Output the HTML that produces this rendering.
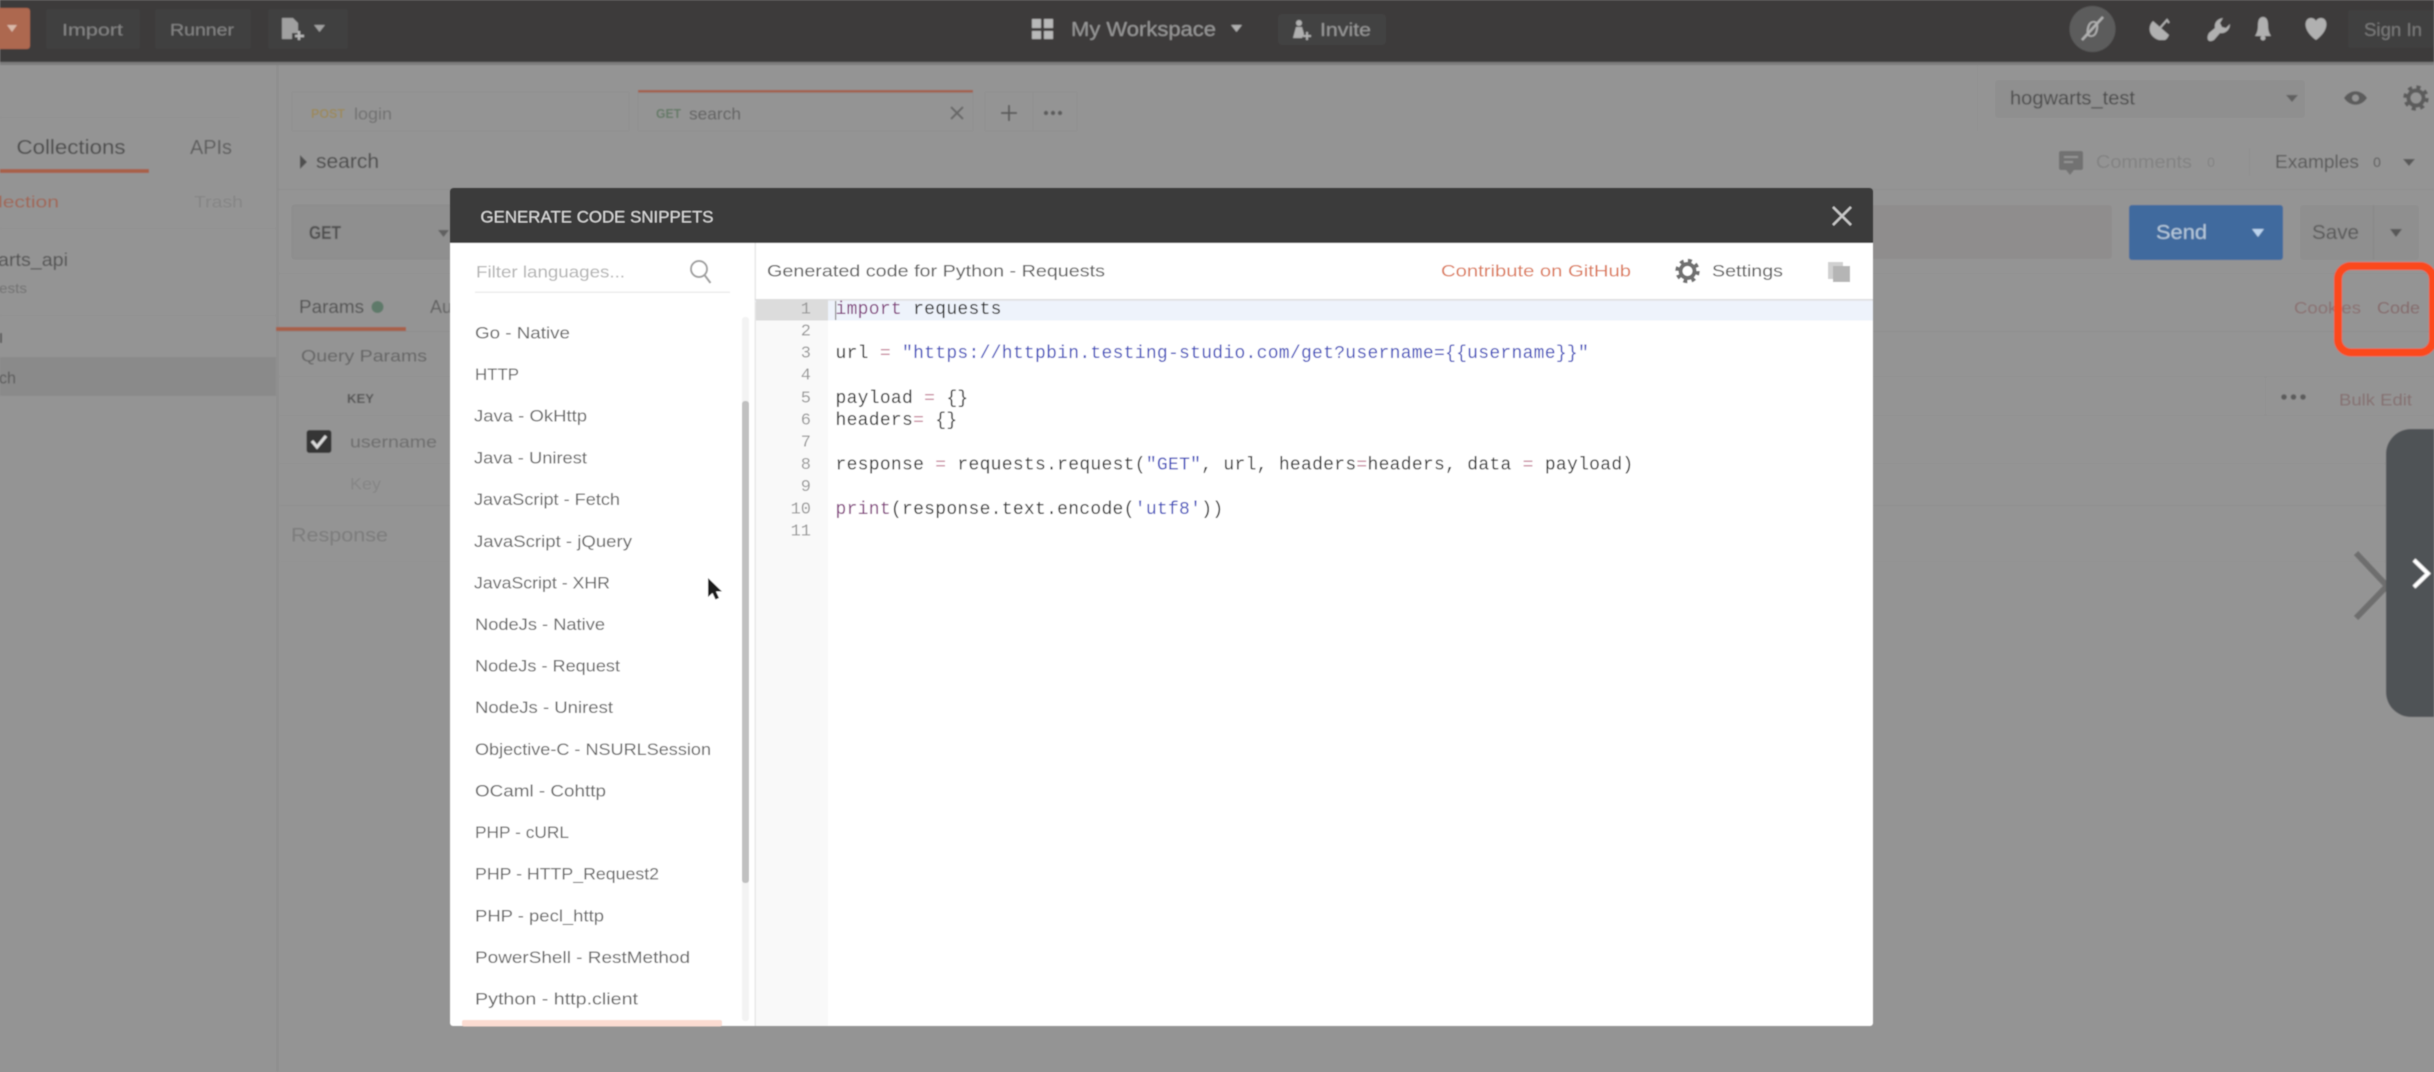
<!DOCTYPE html>
<html lang="en">
<head>
<meta charset="utf-8">
<title>Generate Code Snippets</title>
<style>
html,body{margin:0;padding:0;width:2434px;height:1072px;overflow:hidden;background:#949494}
svg{display:block;position:absolute;left:0;top:0}
text{font-family:"Liberation Sans","DejaVu Sans",sans-serif;dominant-baseline:central;white-space:pre}
.code text{font-family:"Liberation Mono","DejaVu Sans Mono",monospace;font-size:18px;letter-spacing:.28px;fill:#2c2c2c}
.code .n{fill:#999;letter-spacing:0;text-anchor:end;font-size:17px}
.k{fill:#84407f}.s{fill:#3f4cbc}.o{fill:#c98aa0}
.lang text{font-size:17px;fill:#666}
</style>
</head>
<body>
<svg width="2434" height="1072" viewBox="0 0 2434 1072" xmlns="http://www.w3.org/2000/svg">
<defs>
<filter id="b1" x="0" y="0" width="100%" height="100%"><feGaussianBlur stdDeviation="0.9"/></filter>
<filter id="b2" x="-2%" y="-2%" width="104%" height="104%"><feGaussianBlur stdDeviation="0.55"/></filter>
<linearGradient id="sh" x1="0" y1="0" x2="0" y2="1"><stop offset="0" stop-color="#d8d8d8"/><stop offset="1" stop-color="#f4f6fb"/></linearGradient>
</defs>

<!-- dimmed application -->
<g filter="url(#b1)">
<rect width="2434" height="1072" fill="#949494"/>
<!-- top bar -->
<rect width="2434" height="62" fill="#3c3b3b"/>
<rect y="62" width="2434" height="3" fill="#7c7c7c"/>
<rect x="-8" y="8" width="38" height="41" rx="3" fill="#ad6750"/>
<path d="M7 25h10l-5 7z" fill="#d8b8a8"/>
<rect x="46" y="9" width="94" height="40" rx="3" fill="#414141"/>
<text x="62" y="30" font-size="17" fill="#858585" textLength="61" lengthAdjust="spacingAndGlyphs">Import</text>
<rect x="155" y="9" width="96" height="40" rx="3" fill="#414141"/>
<text x="170" y="30" font-size="17" fill="#858585" textLength="64" lengthAdjust="spacingAndGlyphs">Runner</text>
<rect x="268" y="9" width="80" height="40" rx="3" fill="#414141"/>
<path d="M282 18h11l5 5v10h-6v6h-10z" fill="#a0a0a0"/>
<path d="M299 31v9M295 36h9" stroke="#b8b8b8" stroke-width="2.5"/>
<path d="M314 25h11l-5.500 7z" fill="#a0a0a0"/>
<g fill="#b8b8b8"><rect x="1032" y="19" width="9" height="9"/><rect x="1044" y="19" width="9" height="9"/><rect x="1032" y="31" width="9" height="8"/><rect x="1044" y="31" width="9" height="8"/></g>
<text x="1071" y="30" font-size="20" fill="#9a9a9a" textLength="145" lengthAdjust="spacingAndGlyphs">My Workspace</text>
<path d="M1231 25h11l-5.500 7z" fill="#b0b0b0"/>
<rect x="1278" y="14" width="108" height="31" rx="4" fill="#424242"/>
<circle cx="1299" cy="23" r="3" fill="#b0b0b0"/><path d="M1293 38l3-11h6l2 7-2 4z" fill="#b0b0b0"/><path d="M1307 32v8M1303 36h8" stroke="#b0b0b0" stroke-width="2"/>
<text x="1320" y="30" font-size="18" fill="#9a9a9a" textLength="51" lengthAdjust="spacingAndGlyphs">Invite</text>
<circle cx="2092.500" cy="29" r="23" fill="#5c5c5c"/>
<text x="2092" y="29" font-size="23" fill="#b0b0b0" text-anchor="middle" font-style="italic">0</text>
<path d="M2082 40l21-23" stroke="#b0b0b0" stroke-width="2.500"/>
<path d="M2153 21c-6 6-4 16 6 19l6 0c2-1 3-3 4-5z" fill="#b0b0b0"/><path d="M2160 28l7-8 2 3" stroke="#b0b0b0" stroke-width="2" fill="none"/>
<path d="M2208 40c-1-3 0-5 1-7l6-5c-1-5 2-9 8-10l-3 5 2 4 4 1 4-4c0 6-5 10-10 9l-6 7c-2 1-4 2-6 0z" fill="#b0b0b0"/>
<path d="M2263 17c4 0 5 4 5 8 0 5 1 8 3 11h-16c2-3 3-6 3-11 0-4 1-8 5-8z" fill="#b0b0b0"/><circle cx="2263" cy="38" r="2.500" fill="#b0b0b0"/>
<path d="M2316 40c-14-10-12-22-5-22 2 0 4 1 5 3 1-2 3-3 5-3 7 0 9 12-5 22z" fill="#b0b0b0"/>
<rect x="2348" y="10" width="86" height="38" rx="3" fill="#414141"/>
<text x="2364" y="30" font-size="18" fill="#7a7a7a" textLength="58" lengthAdjust="spacingAndGlyphs">Sign In</text>

<!-- sidebar -->
<rect x="276" y="65" width="3" height="1007" fill="#8f8f8f"/>
<rect x="0" y="117" width="240" height="1" fill="#8f8f8f"/>
<text x="16.500" y="148" font-size="20" fill="#484848" textLength="109" lengthAdjust="spacingAndGlyphs">Collections</text>
<text x="190" y="148" font-size="20" fill="#5c5c5c" textLength="42" lengthAdjust="spacingAndGlyphs">APIs</text>
<rect x="0" y="169" width="149" height="4" fill="#a7604a"/>
<text x="-2" y="202" font-size="17" fill="#a06552" textLength="61" lengthAdjust="spacingAndGlyphs">lection</text>
<text x="194" y="202" font-size="17" fill="#858585" textLength="49" lengthAdjust="spacingAndGlyphs">Trash</text>
<rect x="0" y="228" width="276" height="1" fill="#8e8e8e"/>
<text x="-2" y="260" font-size="18" fill="#505050" textLength="70" lengthAdjust="spacingAndGlyphs">arts_api</text>
<text x="-1" y="288" font-size="14" fill="#707070" textLength="28" lengthAdjust="spacingAndGlyphs">ests</text>
<rect x="0" y="315" width="276" height="1" fill="#8e8e8e"/>
<rect x="0" y="333" width="2" height="10" fill="#5c5c5c"/>
<rect x="0" y="357" width="276" height="39" fill="#8a8a8a"/>
<text x="-1" y="378" font-size="17" fill="#585858" textLength="17" lengthAdjust="spacingAndGlyphs">ch</text>

<!-- tabs -->
<rect x="292" y="92" width="337" height="39" fill="none" stroke="#8f8f8f"/>
<text x="311" y="114" font-size="12.500" font-weight="bold" fill="#9b8a5c" textLength="34" lengthAdjust="spacingAndGlyphs">POST</text>
<text x="354" y="114" font-size="17" fill="#6f6f6f" textLength="38" lengthAdjust="spacingAndGlyphs">login</text>
<rect x="638" y="90" width="335" height="3.500" fill="#a3614c"/>
<rect x="638" y="93" width="335" height="38" fill="none" stroke="#8f8f8f"/>
<text x="656" y="114" font-size="12.500" font-weight="bold" fill="#647a66" textLength="25" lengthAdjust="spacingAndGlyphs">GET</text>
<text x="689" y="114" font-size="17" fill="#606060" textLength="52" lengthAdjust="spacingAndGlyphs">search</text>
<path d="M951 107l12 12M963 107l-12 12" stroke="#666" stroke-width="2"/>
<rect x="985" y="92" width="48" height="39" fill="none" stroke="#8f8f8f"/>
<rect x="1033" y="92" width="44" height="39" fill="none" stroke="#8f8f8f"/>
<path d="M1009 105v16M1001 113h16" stroke="#5c5c5c" stroke-width="2"/>
<g fill="#5c5c5c"><circle cx="1046" cy="113" r="2.200"/><circle cx="1053" cy="113" r="2.200"/><circle cx="1060" cy="113" r="2.200"/></g>
<!-- env -->
<rect x="1977" y="65" width="1" height="66" fill="#8e8e8e"/>
<rect x="1995" y="80" width="310" height="38" rx="3" fill="#8f8f8f"/>
<text x="2010" y="99" font-size="19" fill="#4a4a4a" textLength="125" lengthAdjust="spacingAndGlyphs">hogwarts_test</text>
<path d="M2286 95h12l-6 7z" fill="#606060"/>
<path d="M2344 98c6-9 17-9 23 0-6 9-17 9-23 0z" fill="#5c5c5c"/><circle cx="2355.500" cy="98" r="3.500" fill="#949494"/>
<circle cx="2416" cy="98" r="7.500" fill="none" stroke="#5c5c5c" stroke-width="4"/>
<circle cx="2416" cy="98" r="11" fill="none" stroke="#5c5c5c" stroke-width="3.500" stroke-dasharray="4.300 4.340"/>

<!-- breadcrumb -->
<path d="M300 155l7 7-7 7z" fill="#505050"/>
<text x="316" y="162" font-size="20" fill="#484848" textLength="63" lengthAdjust="spacingAndGlyphs">search</text>
<rect x="2059" y="151" width="24" height="19" rx="2" fill="#727272"/><path d="M2066 170h8l-4 5z" fill="#727272"/><path d="M2064 157h14M2064 162h9" stroke="#949494" stroke-width="2"/>
<text x="2096" y="162" font-size="18" fill="#828282" textLength="96" lengthAdjust="spacingAndGlyphs">Comments</text>
<text x="2211" y="162" font-size="14" fill="#828282" text-anchor="middle">0</text>
<rect x="2249" y="148" width="1" height="28" fill="#8c8c8c"/>
<text x="2275" y="162" font-size="18" fill="#585858" textLength="84" lengthAdjust="spacingAndGlyphs">Examples</text>
<text x="2377" y="162" font-size="14" fill="#585858" text-anchor="middle">0</text>
<path d="M2403 159h12l-6 7z" fill="#585858"/>
<rect x="276" y="189" width="2158" height="1" fill="#8c8c8c"/>

<!-- url row -->
<rect x="292" y="205" width="180" height="54" rx="3" fill="#8f8f8f" stroke="#8a8a8a"/>
<text x="309" y="233" font-size="18" font-weight="bold" fill="#505050" textLength="32" lengthAdjust="spacingAndGlyphs">GET</text>
<path d="M438 230h11l-5.500 7z" fill="#606060"/>
<rect x="1860" y="205" width="252" height="54" rx="3" fill="#8f8d8d"/>
<rect x="2129" y="205" width="154" height="55" rx="3" fill="#3f6a9e"/>
<text x="2156" y="233" font-size="20" fill="#b8cadc" textLength="51" lengthAdjust="spacingAndGlyphs">Send</text>
<path d="M2252 229h12l-6 8z" fill="#bcd4ee"/>
<rect x="2300" y="205" width="119" height="55" rx="3" fill="#8f8f8f"/>
<text x="2312" y="233" font-size="20" fill="#585858" textLength="47" lengthAdjust="spacingAndGlyphs">Save</text>
<rect x="2373" y="205" width="1" height="55" fill="#868686"/>
<path d="M2390 229h12l-6 8z" fill="#585858"/>
<rect x="276" y="273" width="2158" height="1" fill="#8e8e8e"/>

<!-- params tabs -->
<text x="299" y="307" font-size="18" fill="#505050" textLength="65" lengthAdjust="spacingAndGlyphs">Params</text>
<circle cx="377.500" cy="307" r="6" fill="#5f7a6a"/>
<text x="430" y="307" font-size="18" fill="#606060">Au</text>
<rect x="276" y="327" width="130" height="4" fill="#a7604a"/>
<rect x="276" y="331" width="2158" height="1" fill="#8c8c8c"/>
<text x="2294" y="308" font-size="17" fill="#8a6f70" textLength="67" lengthAdjust="spacingAndGlyphs">Cookies</text>
<text x="2377" y="308" font-size="17" fill="#85696a" textLength="43" lengthAdjust="spacingAndGlyphs">Code</text>
<text x="301" y="356" font-size="17" fill="#646464" textLength="126" lengthAdjust="spacingAndGlyphs">Query Params</text>
<rect x="276" y="376" width="2158" height="1" fill="#8e8e8e"/>
<text x="347" y="399" font-size="12.500" font-weight="bold" fill="#555" textLength="27" lengthAdjust="spacingAndGlyphs">KEY</text>
<rect x="2265" y="376" width="1" height="39" fill="#8e8e8e"/>
<g fill="#5c5c5c"><circle cx="2284" cy="397" r="2.800"/><circle cx="2293.500" cy="397" r="2.800"/><circle cx="2303" cy="397" r="2.800"/></g>
<text x="2339" y="400" font-size="17" fill="#856f70" textLength="73" lengthAdjust="spacingAndGlyphs">Bulk Edit</text>
<rect x="280" y="415" width="2154" height="1" fill="#8e8e8e"/>
<rect x="306.500" y="430" width="25" height="23" rx="3" fill="#343434"/>
<path d="M312 441l5 6 9-11" fill="none" stroke="#dcdcdc" stroke-width="3"/>
<text x="350" y="442" font-size="17" fill="#6c6c6c" textLength="87" lengthAdjust="spacingAndGlyphs">username</text>
<rect x="280" y="463" width="2154" height="1" fill="#8e8e8e"/>
<text x="350" y="484" font-size="17" fill="#858585" textLength="31" lengthAdjust="spacingAndGlyphs">Key</text>
<rect x="280" y="505" width="2154" height="1" fill="#8c8c8c"/>
<text x="291" y="536" font-size="19" fill="#7c7c7c" textLength="97" lengthAdjust="spacingAndGlyphs">Response</text>
<rect x="280" y="561" width="2154" height="1" fill="#909090"/>

<!-- right overlays -->
<path d="M2356 553l31 33-31 32" fill="none" stroke="#6e6e6e" stroke-width="6"/>
<path d="M2411 429h23v288h-23a25 25 0 0 1-25-25v-238a25 25 0 0 1 25-25z" fill="#505357"/>
<path d="M2414 560l14 13.500-14 13.500" fill="none" stroke="#fff" stroke-width="4"/>
<rect x="2338" y="266" width="95" height="86.500" rx="13" fill="none" stroke="#fb4a1c" stroke-width="8"/>
</g>

<!-- modal -->
<g filter="url(#b2)">
<rect x="450" y="188" width="1423" height="838" rx="3" fill="#fff"/>
<path d="M450 243v-52a3 3 0 0 1 3-3h1417a3 3 0 0 1 3 3v52z" fill="#3b3b3b"/>
<text x="480.500" y="217" font-size="17" fill="#dedede" textLength="233" lengthAdjust="spacingAndGlyphs">GENERATE CODE SNIPPETS</text>
<path d="M1833 207l18 18M1851 207l-18 18" stroke="#c8c8c8" stroke-width="2.400"/>

<!-- language list -->
<text x="476" y="272" font-size="17" fill="#b4b4b4" textLength="149" lengthAdjust="spacingAndGlyphs">Filter languages...</text>
<circle cx="699" cy="269" r="8" fill="none" stroke="#a0a0a0" stroke-width="2"/>
<path d="M704.500 275l6 8" stroke="#a0a0a0" stroke-width="2.200"/>
<rect x="475" y="291.500" width="255" height="1.500" fill="#ececec"/>
<g class="lang">
<text x="475" y="333" textLength="95" lengthAdjust="spacingAndGlyphs">Go - Native</text>
<text x="475" y="374.500" textLength="44" lengthAdjust="spacingAndGlyphs">HTTP</text>
<text x="474" y="416" textLength="113" lengthAdjust="spacingAndGlyphs">Java - OkHttp</text>
<text x="474" y="458" textLength="113" lengthAdjust="spacingAndGlyphs">Java - Unirest</text>
<text x="474" y="499.500" textLength="146" lengthAdjust="spacingAndGlyphs">JavaScript - Fetch</text>
<text x="474" y="541.500" textLength="158" lengthAdjust="spacingAndGlyphs">JavaScript - jQuery</text>
<text x="474" y="583" textLength="136" lengthAdjust="spacingAndGlyphs">JavaScript - XHR</text>
<text x="475" y="624.500" textLength="130" lengthAdjust="spacingAndGlyphs">NodeJs - Native</text>
<text x="475" y="666" textLength="145" lengthAdjust="spacingAndGlyphs">NodeJs - Request</text>
<text x="475" y="707.500" textLength="138" lengthAdjust="spacingAndGlyphs">NodeJs - Unirest</text>
<text x="475" y="749.500" textLength="236" lengthAdjust="spacingAndGlyphs">Objective-C - NSURLSession</text>
<text x="475" y="791" textLength="131" lengthAdjust="spacingAndGlyphs">OCaml - Cohttp</text>
<text x="475" y="832.500" textLength="94" lengthAdjust="spacingAndGlyphs">PHP - cURL</text>
<text x="475" y="874" textLength="184" lengthAdjust="spacingAndGlyphs">PHP - HTTP_Request2</text>
<text x="475" y="916" textLength="129" lengthAdjust="spacingAndGlyphs">PHP - pecl_http</text>
<text x="475" y="957.500" textLength="215" lengthAdjust="spacingAndGlyphs">PowerShell - RestMethod</text>
<text x="475" y="999" textLength="163" lengthAdjust="spacingAndGlyphs">Python - http.client</text>
</g>
<rect x="462" y="1020" width="260" height="6.500" rx="2" fill="#fbdcd2"/>
<rect x="742" y="317" width="7" height="704" rx="3" fill="#f3f3f3"/>
<rect x="742" y="401" width="7" height="482" rx="3" fill="#c0c0c0"/>
<path d="M708 578v19l4.500-4 3 6.500 3.500-1.500-3-6.500h6z" fill="#1c1c1c"/>
<rect x="754.500" y="243" width="1.500" height="783" fill="#e8e8e8"/>

<!-- code header -->
<text x="767" y="271" font-size="17" fill="#5e5e5e" textLength="338" lengthAdjust="spacingAndGlyphs">Generated code for Python - Requests</text>
<text x="1441" y="271" font-size="17" fill="#dc7b5b" textLength="190" lengthAdjust="spacingAndGlyphs">Contribute on GitHub</text>
<circle cx="1687.500" cy="271" r="7" fill="none" stroke="#707070" stroke-width="4"/>
<circle cx="1687.500" cy="271" r="10.500" fill="none" stroke="#707070" stroke-width="3.500" stroke-dasharray="4.100 4.150"/>
<text x="1712" y="271" font-size="17" fill="#5e5e5e" textLength="71" lengthAdjust="spacingAndGlyphs">Settings</text>
<rect x="1828" y="262" width="15" height="17" fill="#d0d0d0"/>
<rect x="1833" y="266" width="17" height="16" fill="#b5b5b5"/>

<!-- editor -->
<rect x="755" y="299" width="1118" height="3" fill="url(#sh)"/>
<rect x="756" y="301" width="72" height="725" fill="#f9f9f9"/>
<rect x="756" y="300" width="72" height="20.500" fill="#dcdcdc"/>
<rect x="828" y="301" width="1045" height="19.500" fill="#eef3fb"/>
<rect x="835" y="301" width="1.200" height="19" fill="#888"/>
<g class="code">
<text class="n" x="811" y="310">1</text>
<text class="n" x="811" y="332">2</text>
<text class="n" x="811" y="354">3</text>
<text class="n" x="811" y="376">4</text>
<text class="n" x="811" y="399">5</text>
<text class="n" x="811" y="421">6</text>
<text class="n" x="811" y="443">7</text>
<text class="n" x="811" y="465.500">8</text>
<text class="n" x="811" y="487.500">9</text>
<text class="n" x="811" y="510">10</text>
<text class="n" x="811" y="532">11</text>
<text x="835.500" y="310"><tspan class="k">import</tspan> requests</text>
<text x="835.500" y="354">url <tspan class="o">=</tspan> <tspan class="s">"https://httpbin.testing-studio.com/get?username={{username}}"</tspan></text>
<text x="835.500" y="399">payload <tspan class="o">=</tspan> {}</text>
<text x="835.500" y="421">headers<tspan class="o">=</tspan> {}</text>
<text x="835.500" y="465.500">response <tspan class="o">=</tspan> requests.request(<tspan class="s">"GET"</tspan>, url, headers<tspan class="o">=</tspan>headers, data <tspan class="o">=</tspan> payload)</text>
<text x="835.500" y="510"><tspan class="k">print</tspan>(response.text.encode(<tspan class="s">'utf8'</tspan>))</text>
</g>
</g>
</svg>
</body>
</html>
